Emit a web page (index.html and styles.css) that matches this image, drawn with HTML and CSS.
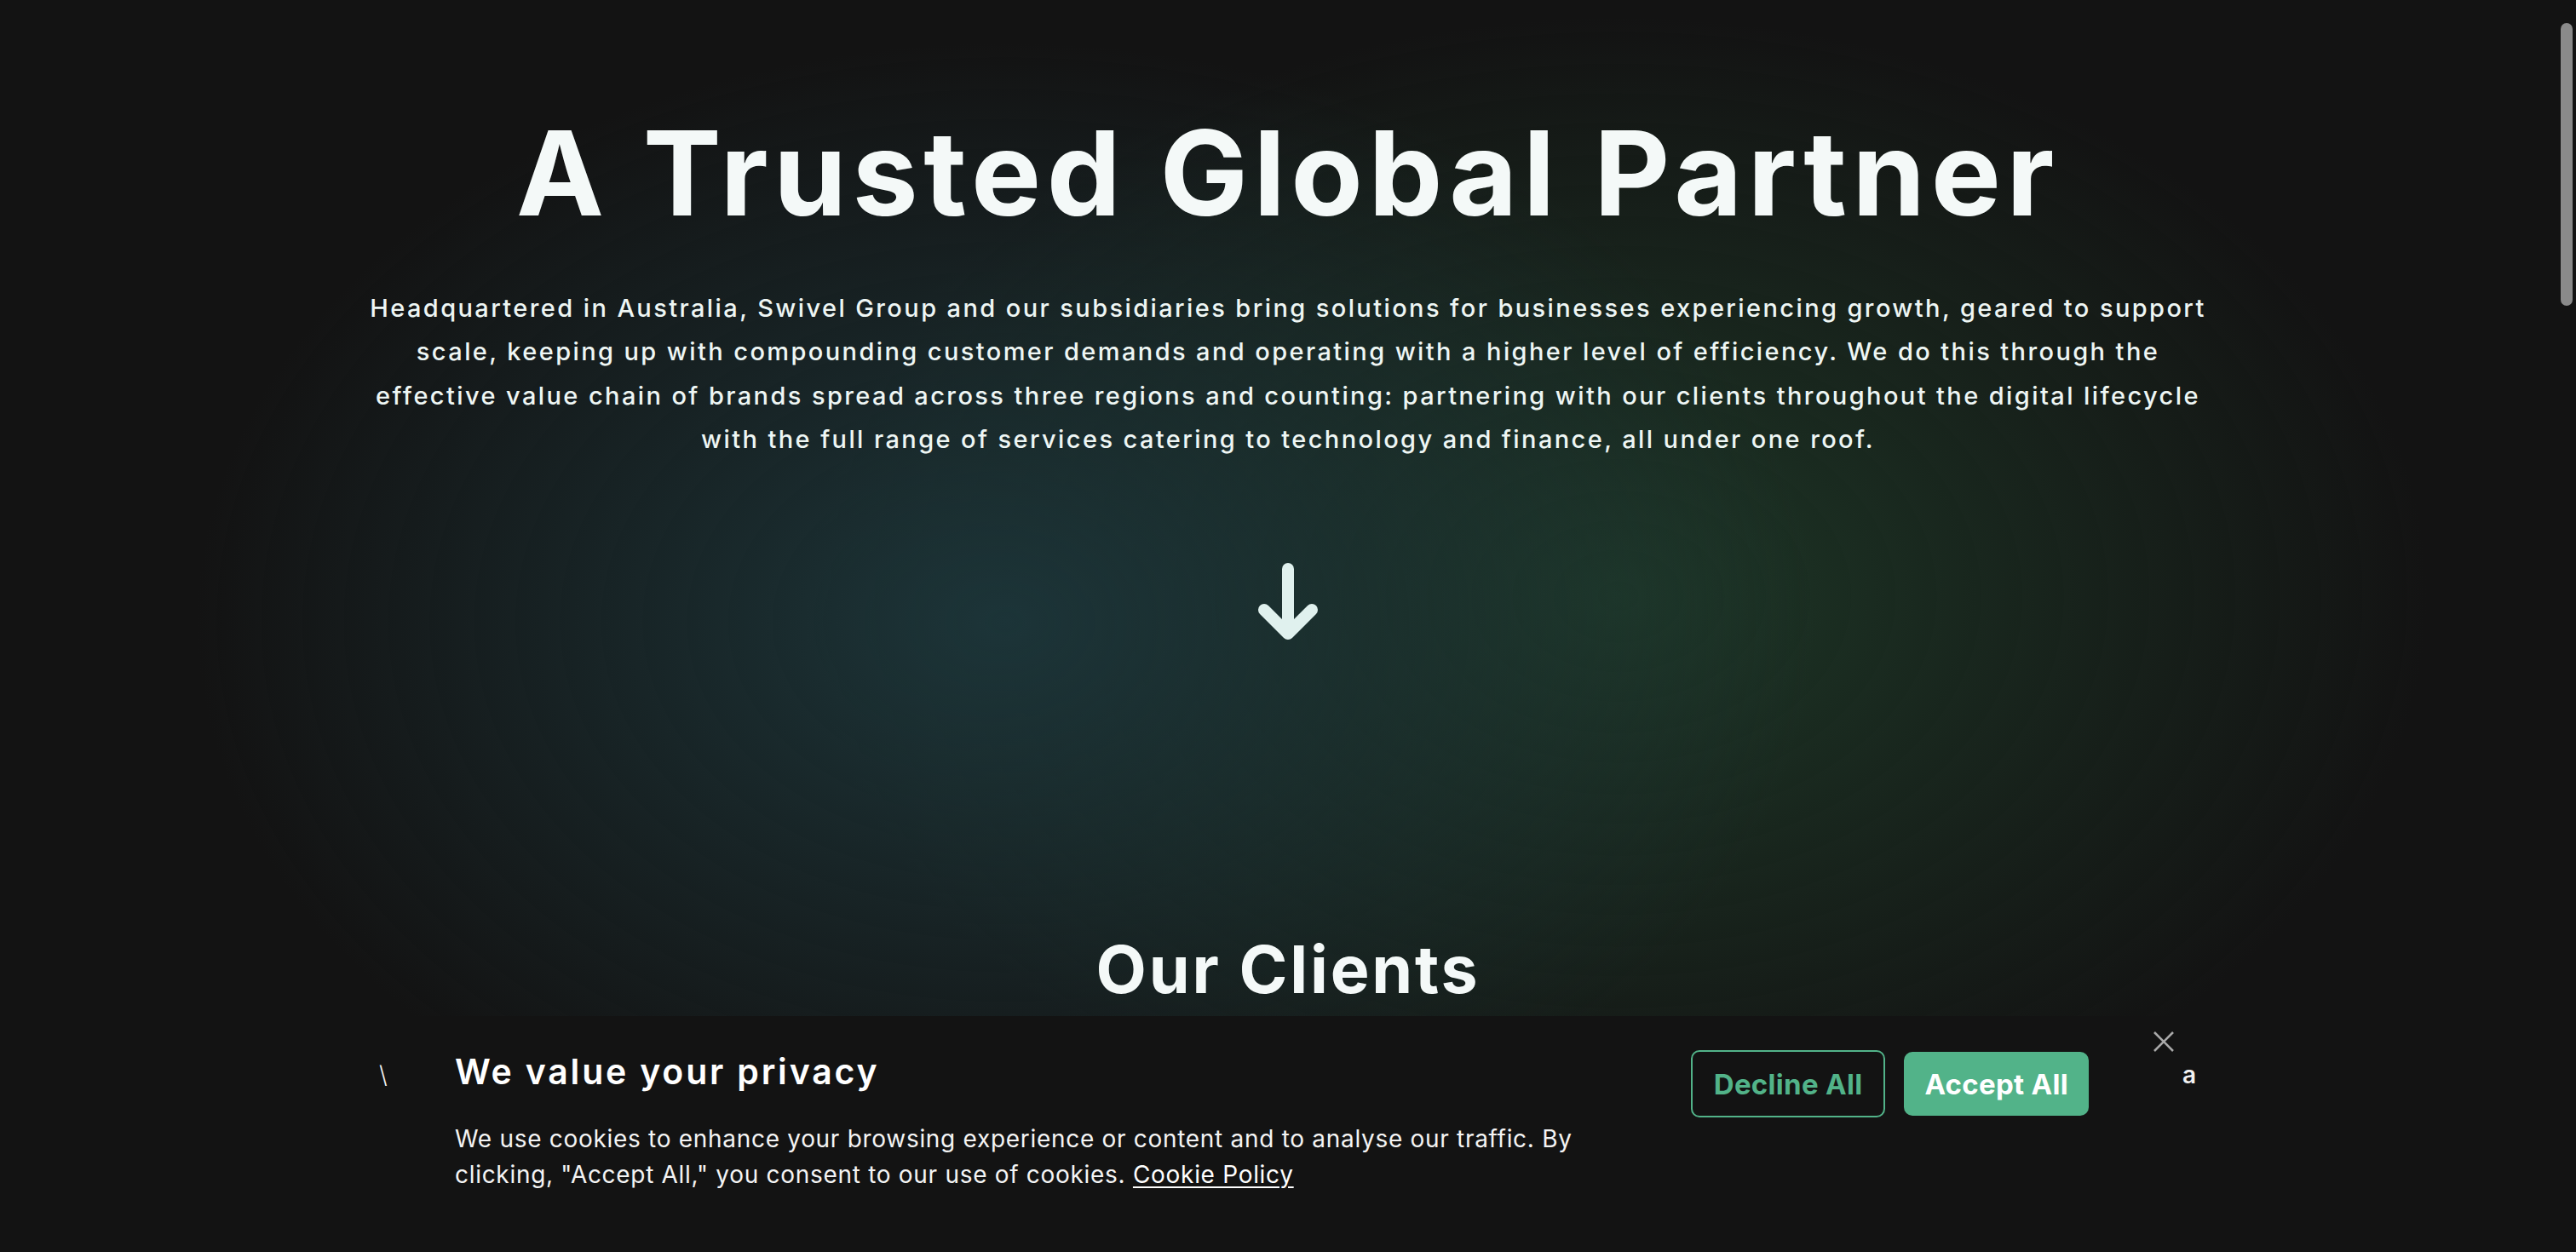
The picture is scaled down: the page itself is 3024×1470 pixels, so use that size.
FILE: index.html
```html
<!DOCTYPE html>
<html lang="en">
<head>
<meta charset="utf-8">
<title>Swivel Group – A Trusted Global Partner</title>
<link rel="stylesheet" href="styles.css">
</head>
<body>
<main class="page">
  <section class="hero">
    <h1 class="hero-title">A Trusted Global Partner</h1>
    <p class="hero-text">Headquartered in Australia, Swivel Group and our subsidiaries bring solutions for businesses experiencing growth, geared to support scale, keeping up with compounding customer demands and operating with a higher level of efficiency. We do this through the effective value chain of brands spread across three regions and counting: partnering with our clients throughout the digital lifecycle with the full range of services catering to technology and finance, all under one roof.</p>
    <a class="scroll-down" href="#clients" aria-label="Scroll down">
      <svg width="80" height="100" viewBox="0 0 80 100" fill="none" stroke="currentColor" stroke-width="14" stroke-linecap="round" stroke-linejoin="round">
        <path d="M40 13 V88"/>
        <path d="M12 61 L40 89 L68 61"/>
      </svg>
    </a>
    <h2 class="section-title" id="clients">Our Clients</h2>
  </section>
  <section class="clients">
    <ul class="client-list">
      <li>Client</li><li>Client</li><li>Client</li><li>Client</li>
    </ul>
  </section>
</main>

<div class="cookie-banner" role="dialog" aria-label="Cookie consent">
  <div class="cookie-inner">
    <span class="peek peek-left">\</span>
    <span class="peek peek-right">a</span>
    <div class="cookie-copy">
      <h3 class="cookie-title">We value your privacy</h3>
      <p class="cookie-text">We use cookies to enhance your browsing experience or content and to analyse our traffic. By clicking, "Accept All," you consent to our use of cookies. <a href="#" class="cookie-link">Cookie Policy</a></p>
    </div>
    <div class="cookie-actions">
      <div class="cookie-buttons">
        <button class="btn btn-outline">Decline All</button>
        <button class="btn btn-solid">Accept All</button>
      </div>
      <button class="cookie-close" aria-label="Close">
        <svg width="24" height="24" viewBox="0 0 24 24" fill="none" stroke="currentColor" stroke-width="2.6">
          <path d="M1 1 L23 23 M23 1 L1 23"/>
        </svg>
      </button>
    </div>
  </div>
</div>
</body>
</html>
```
FILE: styles.css
```css
html {
  color-scheme: dark;
  background: #131313;
}
body {
  margin: 0;
  background: #131313;
  color: #f2f8f6;
  font-family: "Inter", "Noto Sans", sans-serif;
}
/* overlay scrollbar thumb as seen in the capture */
body::after {
  content: "";
  position: fixed;
  top: 27px;
  right: 4px;
  width: 14px;
  height: 332px;
  border-radius: 7px;
  background: #8a8a8a;
}
.page {
  min-height: 6500px;
}
.hero {
  display: flex;
  flex-direction: column;
  align-items: center;
  padding-top: 120px;
  padding-bottom: 60px;
  background:
    radial-gradient(ellipse 950px 680px at 1180px 730px, rgba(28, 52, 56, 1) 0%, rgba(28, 52, 56, 0.55) 45%, rgba(19, 19, 19, 0) 100%),
    radial-gradient(ellipse 950px 680px at 1900px 700px, rgba(29, 54, 38, 1) 0%, rgba(29, 54, 38, 0.55) 45%, rgba(19, 19, 19, 0) 100%),
    #131313;
}
.hero-title {
  margin: 0;
  font-size: 138px;
  line-height: 1.2;
  font-weight: 700;
  letter-spacing: 6.5px;
  color: #f4f9f8;
}
.hero-text {
  margin: 50px 0 0;
  max-width: 2170px;
  font-size: 29px;
  line-height: 51.6px;
  font-weight: 500;
  letter-spacing: 2.4px;
  text-align: center;
  color: #eef6f4;
}
.scroll-down {
  display: block;
  margin-top: 113px;
  color: #e0f1ee;
  line-height: 0;
}
.section-title {
  margin: 337px 0 0;
  font-size: 77px;
  line-height: 1.2;
  font-weight: 700;
  letter-spacing: 2.8px;
  color: #f4f9f8;
}
.clients {
  padding: 40px 0;
}
.client-list {
  list-style: none;
  margin: 0;
  padding: 0;
  display: flex;
  justify-content: center;
  gap: 200px;
  color: #9a9a9a;
  font-size: 28px;
}

/* Cookie banner */
.cookie-banner {
  position: fixed;
  left: 0;
  right: 0;
  bottom: 0;
  height: 277px;
  background: #131313;
}
.cookie-inner {
  position: relative;
  box-sizing: border-box;
  width: 2130px;
  margin: 0 auto;
  padding: 0 25px 0 87px;
  display: flex;
  justify-content: space-between;
  align-items: flex-start;
}
.peek {
  position: absolute;
  top: 52px;
  font-size: 28px;
  font-weight: 600;
  color: #f2f2f2;
}
.peek-left { left: -2px; font-weight: 300; }
.peek-right { right: -1px; }
.cookie-copy {
  width: 1340px;
  padding-top: 41px;
}
.cookie-title {
  margin: 0;
  font-size: 41px;
  line-height: 1.2;
  font-weight: 600;
  letter-spacing: 2.8px;
  color: #ffffff;
}
.cookie-text {
  margin: 33px 0 0;
  font-size: 28px;
  line-height: 42px;
  font-weight: 400;
  letter-spacing: 0.7px;
  color: #f4f4f4;
}
.cookie-link {
  color: #ffffff;
  text-decoration: underline;
  text-underline-offset: 4px;
  text-decoration-thickness: 2px;
}
.cookie-actions {
  display: flex;
  align-items: flex-start;
  gap: 76px;
}
.cookie-buttons {
  display: flex;
  align-items: center;
  gap: 22px;
  margin-top: 40px;
}
.btn {
  font-family: inherit;
  font-size: 33px;
  font-weight: 700;
  letter-spacing: 0.3px;
  border-radius: 10px;
  cursor: pointer;
}
.btn-outline {
  height: 79px;
  padding: 0 25px;
  background: transparent;
  color: #52b389;
  border: 2px solid #52b389;
}
.btn-solid {
  height: 75px;
  padding: 0 24px;
  background: #52b389;
  color: #ffffff;
  border: 0;
}
.cookie-close {
  margin-top: 18px;
  padding: 0;
  background: none;
  border: 0;
  color: #a9a9a9;
  line-height: 0;
  cursor: pointer;
}
```
